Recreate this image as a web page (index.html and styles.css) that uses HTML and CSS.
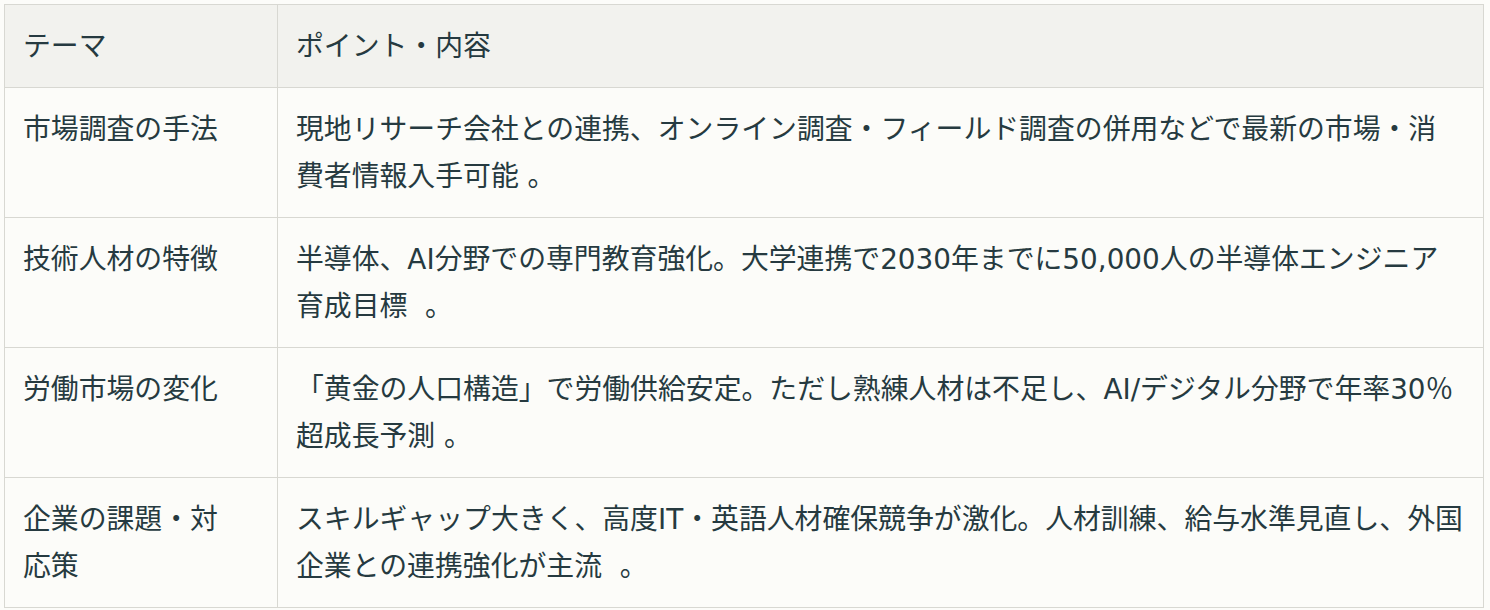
FILE: index.html
```html
<!DOCTYPE html>
<html lang="ja">
<head>
<meta charset="utf-8">
<link rel="stylesheet" href="styles.css">
</head>
<body>
<table class="data-table">
  <colgroup>
    <col class="col-theme">
    <col class="col-point">
  </colgroup>
  <thead>
    <tr>
      <th class="cell cell-theme">テーマ</th>
      <th class="cell cell-point">ポイント・内容</th>
    </tr>
  </thead>
  <tbody>
    <tr>
      <td class="cell cell-theme">市場調査の手法</td>
      <td class="cell cell-point">現地リサーチ会社との連携、オンライン調査・フィールド調査の併用などで最新の市場・消費者情報入手可能 。</td>
    </tr>
    <tr>
      <td class="cell cell-theme">技術人材の特徴</td>
      <td class="cell cell-point">半導体、AI分野での専門教育強化。大学連携で2030年までに50,000人の半導体エンジニア育成目標 &nbsp;。</td>
    </tr>
    <tr>
      <td class="cell cell-theme">労働市場の変化</td>
      <td class="cell cell-point">「黄金の人口構造」で労働供給安定。ただし熟練人材は不足し、AI/デジタル分野で年率30％超成長予測 。</td>
    </tr>
    <tr>
      <td class="cell cell-theme">企業の課題・対応策</td>
      <td class="cell cell-point">スキルギャップ大きく、高度IT・英語人材確保競争が激化。人材訓練、給与水準見直し、外国企業との連携強化が主流 &nbsp;。</td>
    </tr>
  </tbody>
</table>
</body>
</html>
```

FILE: styles.css
```css
html, body {
  margin: 0;
  background: #fcfcf9;
}
body {
  padding: 4px;
  font-family: "DejaVu Sans", "Noto Sans CJK JP", sans-serif;
  color: #263a40;
}
.data-table {
  width: 1480px;
  border-collapse: collapse;
  table-layout: fixed;
  font-size: 27.85px;
  line-height: 47px;
}
.col-theme { width: 273px; }
.cell {
  border: 1px solid #d8d8d2;
  padding: 17.5px 18px;
  text-align: left;
  vertical-align: top;
  font-weight: 400;
}
.cell-theme {
  padding-right: 40px;
}
.cell-point {
  padding-right: 19px;
}
thead .cell {
  background: #f2f2ee;
}
tbody .cell {
  background: #fcfcf9;
}
```
